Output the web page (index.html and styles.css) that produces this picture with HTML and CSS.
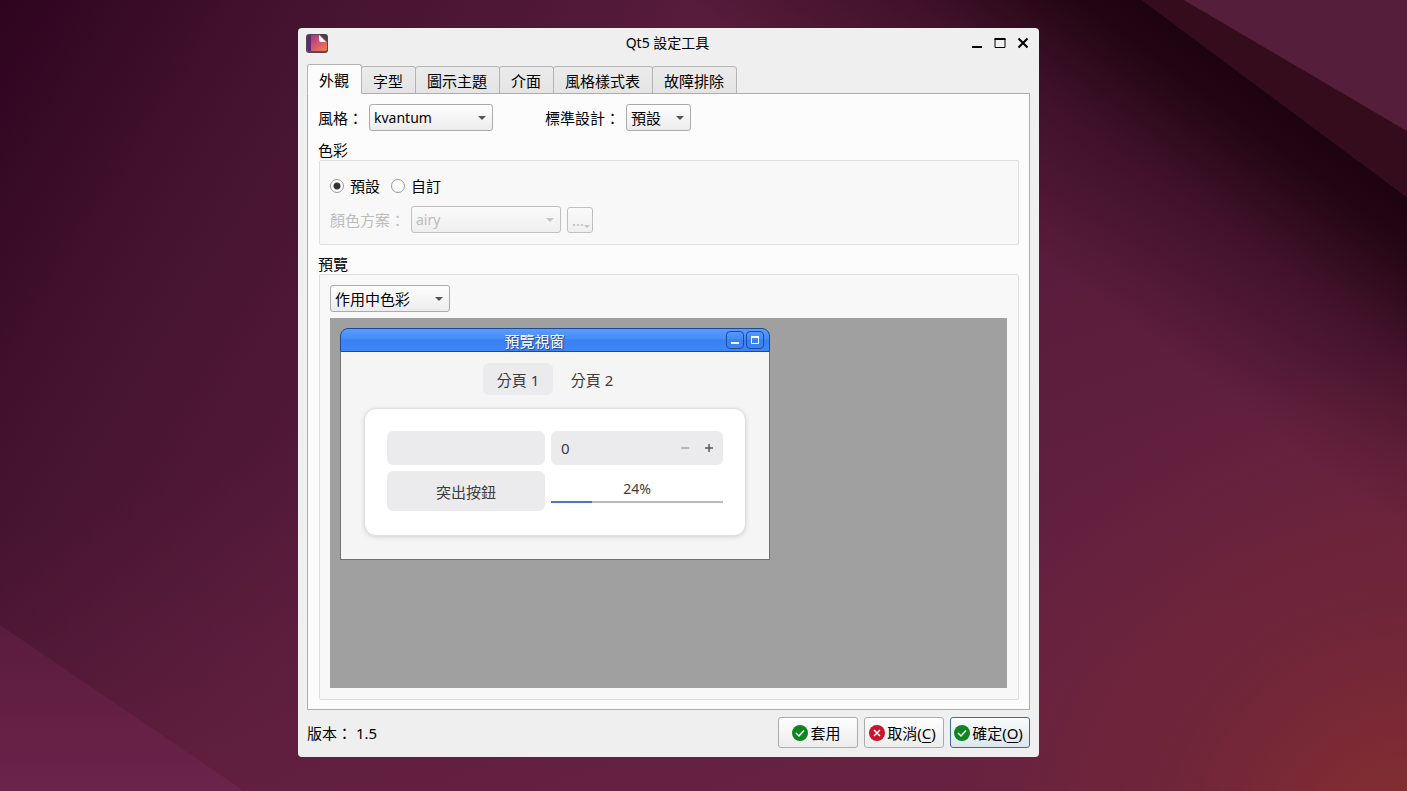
FILE: index.html
```html
<!DOCTYPE html>
<html lang="zh-Hant">
<head>
<meta charset="utf-8">
<title>Qt5 設定工具</title>
<link rel="stylesheet" href="styles.css">
</head>
<body>
<svg class="wallpaper" viewBox="0 0 1407 791" preserveAspectRatio="none" aria-hidden="true">
  <defs>
    <linearGradient id="base" gradientUnits="userSpaceOnUse" x1="0" y1="0" x2="507" y2="312">
      <stop offset="0" stop-color="#2e041f"/><stop offset=".45" stop-color="#451330"/><stop offset="1" stop-color="#571b3b"/>
    </linearGradient>
    <linearGradient id="floor" gradientUnits="userSpaceOnUse" x1="400" y1="400" x2="560" y2="860">
      <stop offset="0" stop-color="#6a2343" stop-opacity="0"/><stop offset="1" stop-color="#6a2343" stop-opacity=".8"/>
    </linearGradient>
    <linearGradient id="shade" gradientUnits="userSpaceOnUse" x1="1142" y1="0" x2="982" y2="216">
      <stop offset="0" stop-color="#1d030f"/><stop offset=".15" stop-color="#1d030f" stop-opacity=".9"/><stop offset=".5" stop-color="#1d030f" stop-opacity=".4"/><stop offset="1" stop-color="#1d030f" stop-opacity="0"/>
    </linearGradient>
    <radialGradient id="glow" gradientUnits="userSpaceOnUse" cx="1407" cy="850" r="500">
      <stop offset="0" stop-color="#8a302f"/><stop offset=".5" stop-color="#7a2a30" stop-opacity=".45"/><stop offset="1" stop-color="#7a2a30" stop-opacity="0"/>
    </radialGradient>
    <linearGradient id="corner" x1="0" y1="0" x2="0" y2="1">
      <stop offset="0" stop-color="#5a1c3e"/><stop offset="1" stop-color="#6b234a"/>
    </linearGradient>
  </defs>
  <rect width="1407" height="791" fill="url(#base)"/>
  <rect width="1407" height="791" fill="url(#floor)"/>
  <path d="M0 0H1142L1407 197V791H0Z" fill="url(#shade)"/>
  <path d="M1142 0H1184L1407 131V197Z" fill="#340c1c"/>
  <path d="M1184 0H1407V131Z" fill="#551e3b"/>
  <rect width="1407" height="791" fill="url(#glow)"/>
  <path d="M0 625L244 791H0Z" fill="url(#corner)"/>
</svg>

<div class="desktop">
<main class="window">
  <header class="titlebar">
    <svg class="app-icon" viewBox="0 0 22 20" aria-hidden="true">
      <defs>
        <linearGradient id="app" x1="0" y1="0" x2="1" y2="1"><stop offset="0" stop-color="#8b3a7c"/><stop offset=".5" stop-color="#d0517a"/><stop offset="1" stop-color="#f5803a"/></linearGradient>
      </defs>
      <rect width="22" height="19" y="1" rx="3" fill="#57465a"/>
      <path d="M3 2H14L21 9V16Q21 18 19 18H3Q1 18 1 16V4Q1 2 3 2Z" fill="url(#app)"/>
      <path d="M3 2H5V18H3Q1 18 1 16V4Q1 2 3 2Z" fill="#5e2a6b"/>
      <path d="M14 1L21 8V4Q21 1 18 1Z" fill="#454145"/>
      <path d="M13 2L20 9H15Q13 9 13 7Z" fill="#fff"/>
    </svg>
    <h1 class="title">Qt5 設定工具</h1>
    <div class="controls">
      <button class="control" aria-label="最小化"><svg viewBox="0 0 12 12"><path d="M1 10H11" stroke="#000" stroke-width="2"/></svg></button>
      <button class="control" aria-label="最大化"><svg viewBox="0 0 12 12"><path d="M1 2V10.500H11V2" fill="none" stroke="#000"/><path d="M.5 2H11.500" stroke="#000" stroke-width="2"/></svg></button>
      <button class="control" aria-label="關閉"><svg viewBox="0 0 12 12"><path d="M1.500 1.500L10.500 10.500M10.500 1.500L1.500 10.500" stroke="#000" stroke-width="2"/></svg></button>
    </div>
  </header>

  <div class="tabs" role="tablist">
    <button class="tab active" role="tab" aria-selected="true">外觀</button>
    <button class="tab" role="tab">字型</button>
    <button class="tab" role="tab">圖示主題</button>
    <button class="tab" role="tab">介面</button>
    <button class="tab" role="tab">風格樣式表</button>
    <button class="tab" role="tab">故障排除</button>
  </div>

  <section class="panel">
    <div class="row">
      <div class="field">
        <label for="style">風格：</label>
        <span class="combo combo-style latin"><select id="style"><option>kvantum</option></select></span>
      </div>
      <div class="field">
        <label for="dialogs">標準設計：</label>
        <span class="combo combo-dialogs"><select id="dialogs"><option>預設</option></select></span>
      </div>
    </div>

    <section class="group">
      <h2 class="group-title">色彩</h2>
      <div class="frame palette">
        <div class="radios">
          <label class="radio"><input type="radio" name="palette" checked>預設</label>
          <label class="radio"><input type="radio" name="palette">自訂</label>
        </div>
        <div class="field disabled">
          <label for="scheme">顏色方案：</label>
          <span class="combo combo-scheme latin"><select id="scheme" disabled><option>airy</option></select></span>
          <button class="more" disabled>...</button>
        </div>
      </div>
    </section>

    <section class="group grow">
      <h2 class="group-title">預覽</h2>
      <div class="frame preview">
        <span class="combo combo-state"><select aria-label="預覽"><option>作用中色彩</option></select></span>
        <div class="canvas">
          <section class="subwindow">
            <header class="subtitle">
              <h3>預覽視窗</h3>
              <button class="sub-control" aria-label="最小化"><svg viewBox="0 0 16 16"><path d="M4 11H12" stroke="#fff" stroke-width="2"/></svg></button>
              <button class="sub-control" aria-label="最大化"><svg viewBox="0 0 16 16"><path d="M4.500 5V11.500H11.500V5" fill="none" stroke="#fff"/><path d="M4 5H12" stroke="#fff" stroke-width="2"/></svg></button>
            </header>
            <div class="subbody">
              <div class="pills" role="tablist">
                <button class="pill selected" role="tab" aria-selected="true">分頁 1</button>
                <button class="pill" role="tab">分頁 2</button>
              </div>
              <div class="card">
                <input class="soft" type="text" aria-label="文字">
                <div class="spin">
                  <input type="text" value="0" aria-label="數值">
                  <button disabled aria-label="減少"><svg viewBox="0 0 10 10"><path d="M1 5H9" stroke="#b8b8ba" stroke-width="2"/></svg></button>
                  <button aria-label="增加"><svg viewBox="0 0 10 10"><path d="M1 5H9M5 1V9" stroke="#5a5a5c" stroke-width="1.500"/></svg></button>
                </div>
                <button class="soft">突出按鈕</button>
                <div class="meter">
                  <label for="progress">24%</label>
                  <progress id="progress" value="24" max="100"></progress>
                </div>
              </div>
            </div>
          </section>
        </div>
      </div>
    </section>
  </section>

  <footer class="footer">
    <p class="version">版本： 1.5</p>
    <button class="action"><svg viewBox="0 0 16 16"><circle cx="8" cy="8" r="8" fill="#0f8420"/><path d="M4 8L7 11L12 5.500" fill="none" stroke="#fff" stroke-width="1.500"/></svg><span>套用</span></button>
    <button class="action"><svg viewBox="0 0 16 16"><circle cx="8" cy="8" r="8" fill="#c7162b"/><path d="M5 5L11 11M11 5L5 11" stroke="#fff" stroke-width="1.500"/></svg><span>取消(<u>C</u>)</span></button>
    <button class="action default"><svg viewBox="0 0 16 16"><circle cx="8" cy="8" r="8" fill="#0f8420"/><path d="M4 8L7 11L12 5.500" fill="none" stroke="#fff" stroke-width="1.500"/></svg><span>確定(<u>O</u>)</span></button>
  </footer>
</main>
</div>
</body>
</html>
```
FILE: styles.css
```css
* {
  box-sizing: border-box;
}

body {
  margin: 0;
  background: #551c3a;
  color: #000;
  font: 15px/20px "Noto Sans", "Noto Sans CJK TC", sans-serif;
}

button,
input,
select {
  margin: 0;
  padding: 0;
  border: 0;
  background: none;
  color: inherit;
  font: inherit;
}

h1,
h2,
h3,
p {
  margin: 0;
  font-size: inherit;
  font-weight: 400;
}

svg {
  display: block;
}

u {
  text-underline-offset: 3px;
}

.wallpaper {
  position: fixed;
  inset: 0;
  width: 100%;
  height: 100%;
  z-index: -1;
}

.desktop {
  display: grid;
  grid-template-columns: 298fr 741fr 368fr;
  min-height: 100vh;
  padding: 28px 0 34px;
}

.window {
  grid-column: 2;
  display: flex;
  flex-direction: column;
  padding: 0 9px 9px;
  border-radius: 4px;
  background: #efefef;
}

/* Title bar */
.titlebar {
  display: grid;
  grid-template-columns: 58px 1fr 58px;
  align-items: center;
  height: 30px;
  margin: 0 1px 0 -1px;
}

.app-icon {
  width: 22px;
  height: 20px;
}

.title {
  font-size: 14px;
  text-align: center;
}

.controls {
  display: flex;
  justify-content: space-between;
}

.control svg {
  width: 12px;
  height: 12px;
}

/* Tabs */
.tabs {
  display: flex;
  align-items: flex-end;
  margin-top: 6px;
  margin-bottom: -1px;
}

.tab {
  height: 28px;
  margin-left: -1px;
  padding: 2px 12px 0 11px;
  border: 1px solid #b4b4b4;
  border-radius: 3px 3px 0 0;
  background: linear-gradient(#ebebeb, #e4e4e4);
}

.tab.active {
  z-index: 1;
  height: 30px;
  margin-left: 0;
  border-bottom-color: #fcfcfc;
  background: #fcfcfc;
}

.panel {
  flex: 1;
  display: flex;
  flex-direction: column;
  gap: 10px;
  padding: 10px 10px 9px;
  border: 1px solid #adadad;
  background: #fcfcfc;
}

.row {
  display: flex;
  gap: 52px;
}

.field {
  display: flex;
  align-items: center;
  gap: 6px;
}

/* Drop-downs */
.combo {
  display: grid;
  align-items: center;
}

.combo select,
.combo::after {
  grid-area: 1 / 1;
}

.combo::after {
  content: "";
  justify-self: end;
  margin-right: 7px;
  border: 4px solid transparent;
  border-top-color: #555;
  border-bottom-width: 0;
  pointer-events: none;
}

.combo select {
  appearance: none;
  width: 100%;
  height: 27px;
  padding-left: 4px;
  border: 1px solid #ababab;
  border-radius: 3px;
  background: linear-gradient(#fefefe, #ececec);
}

.latin {
  font-size: 14px;
}

.combo-style {
  width: 124px;
}

.combo-dialogs {
  width: 65px;
}

.combo-scheme {
  width: 150px;
}

.combo-state {
  width: 120px;
}

/* Groups */
.group {
  display: flex;
  flex-direction: column;
}

.grow {
  flex: 1;
}

.group-title {
  line-height: 19px;
}

.frame {
  display: flex;
  flex-direction: column;
  margin-left: 1px;
  border: 1px solid #dedede;
  border-radius: 2px;
  background: #f8f8f8;
}

.palette {
  gap: 9px;
  padding: 14px 10px 11px;
}

.radios {
  display: flex;
  gap: 11px;
}

.radio {
  display: flex;
  align-items: center;
  gap: 6px;
  height: 22px;
}

.radio input {
  appearance: none;
  width: 14px;
  height: 14px;
  border: 1px solid #999;
  border-radius: 50%;
  background: #fff;
}

.radio input:checked {
  background: radial-gradient(circle, #333 3px, #fff 4px);
}

.disabled,
.disabled select {
  color: #bcbcbc;
  opacity: 1;
}

.disabled .combo::after {
  border-top-color: #c4c4c4;
}

.disabled .combo select,
.more {
  border-color: #c0c0c0;
  background: linear-gradient(#fafafa, #efefef);
}

.more {
  display: flex;
  align-items: center;
  justify-content: flex-end;
  width: 26px;
  height: 26px;
  padding-right: 2px;
  border: 1px solid #c0c0c0;
  border-radius: 3px;
}

.more::after {
  content: "";
  align-self: flex-end;
  margin-bottom: 4px;
  border: 3px solid transparent;
  border-top-color: #c4c4c4;
  border-bottom-width: 0;
}

.preview {
  flex: 1;
  gap: 6px;
  padding: 10px 11px 11px 10px;
}

.canvas {
  flex: 1;
  padding: 10px;
  background: #a0a0a0;
}

/* Preview window */
.subwindow {
  max-width: 430px;
  border-radius: 8px 8px 0 0;
  color: #3c3c3e;
}

.subtitle {
  display: flex;
  align-items: center;
  gap: 4px;
  height: 24px;
  padding: 0 5px 0 6px;
  border: 1px solid #1f4a91;
  border-radius: 8px 8px 0 0;
  background: linear-gradient(#5a9cff, #458cf9 45%, #3a80f0 50%, #3c87fc);
}

.subtitle h3 {
  flex: 1;
  padding-top: 2px;
  color: #fff;
  text-align: center;
  text-shadow: 1px 1px 1px #20447f;
}

.sub-control {
  width: 18px;
  height: 18px;
  border: 1px solid #1c4c9c;
  border-radius: 4px;
}

.sub-control + .sub-control {
  margin-left: -2px;
}

.subbody {
  padding: 11px 23px 23px;
  border: 1px solid #707070;
  border-top: 0;
  background: #f5f5f5;
}

.pills {
  display: flex;
  justify-content: center;
  gap: 4px;
  margin-bottom: 13px;
}

.pill {
  width: 70px;
  height: 32px;
  padding-top: 2px;
  border-radius: 6px;
}

.pill.selected {
  background: #ebebed;
}

.card {
  display: grid;
  grid-template-columns: 158fr 172fr;
  gap: 6px;
  padding: 22px 22px 24px;
  border: 1px solid #e0e0e0;
  border-radius: 12px;
  background: #fff;
  box-shadow: 0 1px 4px #00000026;
}

.soft,
.spin {
  min-width: 0;
  border-radius: 6px;
  background: #ebebed;
}

input.soft {
  height: 34px;
  padding: 0 10px;
}

button.soft {
  height: 40px;
  padding-top: 2px;
}

.spin {
  display: flex;
  align-items: center;
  gap: 14px;
  padding: 0 9px 0 10px;
}

.spin input {
  flex: 1;
  min-width: 0;
}

.spin svg {
  width: 10px;
  height: 10px;
}

.meter {
  display: flex;
  flex-direction: column;
  padding-top: 8px;
  font-size: 14px;
  text-align: center;
}

.meter progress {
  appearance: none;
  width: 100%;
  height: 2px;
  margin-top: 2px;
  border: 0;
}

.meter progress::-webkit-progress-bar {
  background: #bababb;
}

.meter progress::-webkit-progress-value {
  background: #3f7fba;
}

/* Footer */
.footer {
  display: flex;
  align-items: center;
  gap: 6px;
  padding-top: 7px;
}

.version {
  flex: 1;
}

.action {
  display: flex;
  align-items: center;
  justify-content: center;
  gap: 2px;
  width: 80px;
  height: 31px;
  padding-right: 3px;
  border: 1px solid #ababab;
  border-radius: 3px;
  background: linear-gradient(#fefefe, #ececec);
  white-space: nowrap;
}

.action svg {
  flex: none;
  width: 16px;
  height: 16px;
}

.action.default {
  border-color: #34719a;
  background: linear-gradient(#fafcfd, #dbe6ec);
}
```
